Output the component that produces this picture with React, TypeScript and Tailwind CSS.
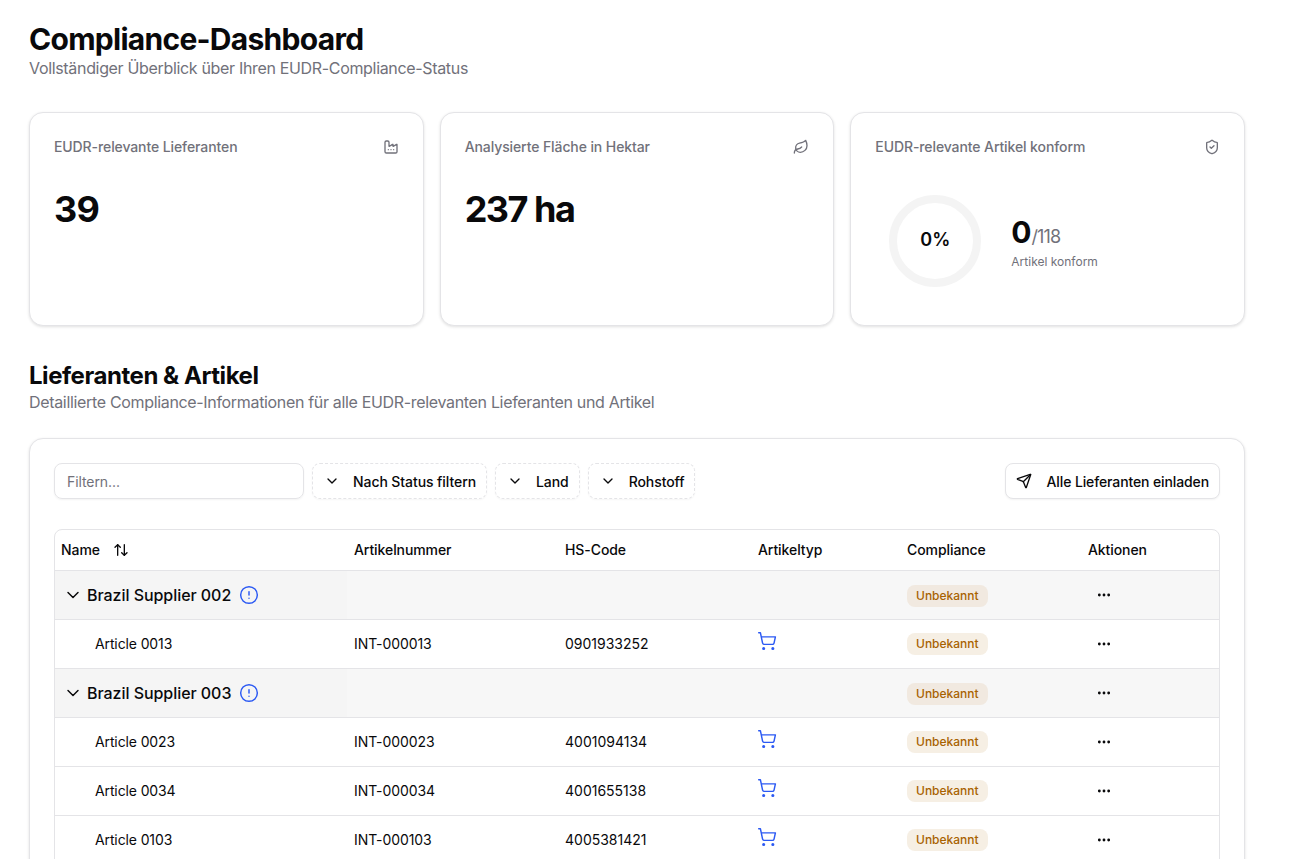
import { ArrowUpDown, ChevronDown, CircleAlert, Ellipsis, Factory, Leaf, Send, ShieldCheck, ShoppingCart } from 'lucide-react';

const Status = ({ shaded }: { shaded?: boolean }) => (
  <span className={`-mt-[1px] inline-flex h-[22px] items-center rounded-[8px] px-[9px] text-[12px] font-medium tracking-normal text-[#a86200] ${shaded ? 'bg-[#f1e9e0]' : 'bg-[#f6efe4]'}`}>
    Unbekannt
  </span>
);

const Actions = () => (
  <div className="flex w-[32px] justify-center">
    <Ellipsis className="h-4 w-4 text-[#09090b]" strokeWidth={2.25} />
  </div>
);

const GroupRow = ({ name }: { name: string }) => (
  <tr className="h-[49px] border-b border-[#e4e4e7] bg-[#f7f7f7]">
    <td className="bg-[#f5f5f5] pl-[8px]">
      <div className="flex items-center">
        <ChevronDown className="h-5 w-5" strokeWidth={1.75} />
        <span className="ml-[4px] text-[16px] font-medium tracking-[-0.05px]">{name}</span>
        <CircleAlert className="ml-[8px] h-5 w-5 text-[#2b59f3]" strokeWidth={1.75} />
      </div>
    </td>
    <td />
    <td />
    <td />
    <td className="px-[7px]"><Status shaded /></td>
    <td className="px-[7px]"><Actions /></td>
  </tr>
);

const ArticleRow = ({ name, number, code }: { name: string; number: string; code: string }) => (
  <tr className="h-[49px] border-b border-[#e4e4e7] text-[14px]">
    <td className="pl-[40px] tracking-[-0.12px]">{name}</td>
    <td className="px-[7px]">{number}</td>
    <td className="px-[7px] tracking-normal">{code}</td>
    <td className="px-[7px]">
      <ShoppingCart className="-ml-[1.5px] mb-[5px] h-5 w-5 text-[#2b59f3]" strokeWidth={1.75} />
    </td>
    <td className="px-[7px]"><Status /></td>
    <td className="px-[7px]"><Actions /></td>
  </tr>
);

const StatCard = ({ title, icon, children }: { title: string; icon: React.ReactNode; children: React.ReactNode }) => (
  <div className="h-[214px] rounded-[14px] border border-[#e4e4e7] bg-white px-6 pt-[23px] shadow-[0_1px_3px_rgba(0,0,0,0.12)]">
    <div className="flex h-[21px] items-center justify-between">
      <span className="text-[14px] font-medium tracking-[-0.1px] text-[#71717a]">{title}</span>
      {icon}
    </div>
    {children}
  </div>
);

const FilterButton = ({ label }: { label: string }) => (
  <button className="flex h-[36px] items-center rounded-[8px] border border-dashed border-[#e4e4e7] pl-[11px] pr-[10px] text-[14px] font-medium tracking-[-0.08px] shadow-[0_1px_2px_rgba(0,0,0,0.04)]">
    <ChevronDown className="h-4 w-4" strokeWidth={2} />
    <span className="ml-[13px]">{label}</span>
  </button>
);

export default function App() {
  return (
    <div className="h-screen overflow-hidden bg-white pl-[29px] pr-[65px] pt-[21px] font-['Inter',sans-serif] tracking-[-0.08px] text-[#09090b]">
      <h1 className="text-[30px] font-bold leading-[36px] tracking-[-0.72px]">Compliance-Dashboard</h1>
      <p className="-mt-[1px] text-[16px] leading-[24px] tracking-[-0.33px] text-[#71717a]">Vollständiger Überblick über Ihren EUDR-Compliance-Status</p>

      <div className="mt-[32px] grid grid-cols-3 gap-4">
        <StatCard title="EUDR-relevante Lieferanten" icon={<Factory className="h-4 w-4 text-[#71717a]" strokeWidth={2} />}>
          <div className="mt-[32px] text-[36px] font-bold leading-[40px] tracking-[-0.8px]">39</div>
        </StatCard>
        <StatCard title="Analysierte Fläche in Hektar" icon={<Leaf className="h-4 w-4 text-[#71717a]" strokeWidth={2} />}>
          <div className="mt-[32px] text-[36px] font-bold leading-[40px] tracking-[-1.5px]">237 ha</div>
        </StatCard>
        <StatCard title="EUDR-relevante Artikel konform" icon={<ShieldCheck className="h-4 w-4 text-[#71717a]" strokeWidth={2} />}>
          <div className="ml-[14px] mt-[38px] flex items-center">
            <div className="flex h-[92px] w-[92px] items-center justify-center rounded-full border-[8px] border-[#f4f4f4] pb-[4px] text-[18px] font-semibold tracking-normal">
              0%
            </div>
            <div className="ml-[30px] pt-[2px]">
              <div className="flex items-baseline">
                <span className="text-[30px] font-bold leading-[36px]">0</span>
                <span className="text-[18px] tracking-[-0.9px] text-[#71717a]">/118</span>
              </div>
              <div className="mt-[4px] text-[12px] leading-[16px] tracking-normal text-[#71717a]">Artikel konform</div>
            </div>
          </div>
        </StatCard>
      </div>

      <h2 className="mt-[35px] text-[24px] font-bold leading-[29px] tracking-[-0.45px]">Lieferanten &amp; Artikel</h2>
      <p className="text-[16px] leading-[24px] tracking-[-0.33px] text-[#71717a]">Detaillierte Compliance-Informationen für alle EUDR-relevanten Lieferanten und Artikel</p>

      <div className="mt-[24px] rounded-t-[14px] border border-[#e4e4e7] bg-white px-6 pb-6 pt-6 shadow-[0_1px_3px_rgba(0,0,0,0.12)]">
        <div className="flex items-center gap-2">
          <div className="flex h-[36px] w-[250px] items-center rounded-[8px] border border-[#e4e4e7] px-3 text-[14px] text-[#71717a] shadow-[0_1px_2px_rgba(0,0,0,0.05)]">
            Filtern...
          </div>
          <FilterButton label="Nach Status filtern" />
          <FilterButton label="Land" />
          <FilterButton label="Rohstoff" />
          <button className="ml-auto flex h-[36px] items-center rounded-[8px] border border-[#e4e4e7] bg-white pl-[10px] pr-[10px] text-[14px] font-medium tracking-[-0.12px] shadow-[0_1px_2px_rgba(0,0,0,0.05)]">
            <Send className="h-4 w-4" strokeWidth={2} />
            <span className="ml-[15px]">Alle Lieferanten einladen</span>
          </button>
        </div>

        <div className="mt-[30px] overflow-hidden rounded-t-[8px] border border-[#e4e4e7]">
          <table className="w-full table-fixed border-collapse">
            <colgroup>
              <col className="w-[292px]" />
              <col className="w-[211px]" />
              <col className="w-[193px]" />
              <col className="w-[149px]" />
              <col className="w-[181px]" />
              <col />
            </colgroup>
            <thead>
              <tr className="h-[40px] border-b border-[#e4e4e7] text-left text-[14px] font-medium">
                <th className="px-[6px] font-medium">
                  <div className="flex items-center">
                    Name
                    <ArrowUpDown className="ml-[13px] h-4 w-4" strokeWidth={2} />
                  </div>
                </th>
                <th className="px-[7px] font-medium">Artikelnummer</th>
                <th className="px-[7px] font-medium">HS-Code</th>
                <th className="px-[7px] font-medium">Artikeltyp</th>
                <th className="px-[7px] font-medium">Compliance</th>
                <th className="px-[7px] font-medium">Aktionen</th>
              </tr>
            </thead>
            <tbody>
              <GroupRow name="Brazil Supplier 002" />
              <ArticleRow name="Article 0013" number="INT-000013" code="0901933252" />
              <GroupRow name="Brazil Supplier 003" />
              <ArticleRow name="Article 0023" number="INT-000023" code="4001094134" />
              <ArticleRow name="Article 0034" number="INT-000034" code="4001655138" />
              <ArticleRow name="Article 0103" number="INT-000103" code="4005381421" />
            </tbody>
          </table>
        </div>
      </div>
    </div>
  );
}
